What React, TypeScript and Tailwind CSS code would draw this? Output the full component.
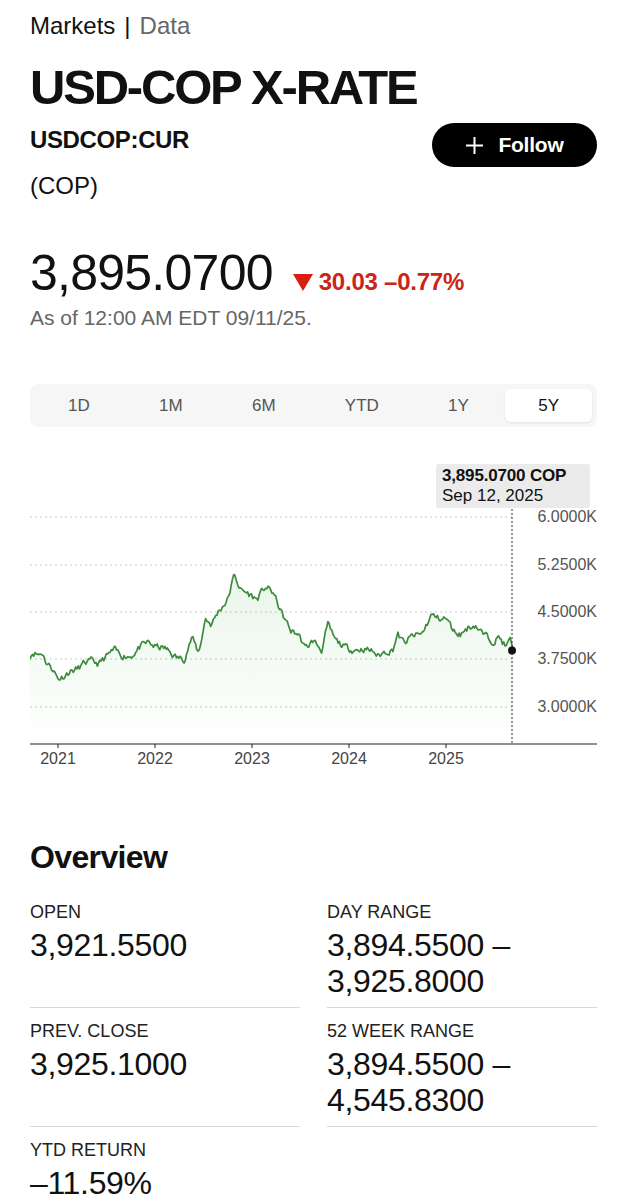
import React from 'react';

const FONT = { fontFamily: '"Liberation Sans", Arial, sans-serif' };

const anchors: [number, number][] = [
  [2020.71, 3800], [2020.74, 3870], [2020.8, 3830], [2020.84, 3860], [2020.88, 3700],
  [2020.95, 3600], [2021.0, 3440], [2021.05, 3480], [2021.12, 3560], [2021.2, 3600],
  [2021.28, 3700], [2021.35, 3720], [2021.42, 3680], [2021.5, 3800], [2021.58, 3900],
  [2021.65, 3820], [2021.75, 3800], [2021.85, 3950], [2021.93, 4020], [2022.0, 3950],
  [2022.1, 3930], [2022.22, 3780], [2022.3, 3760], [2022.38, 4100], [2022.45, 3850],
  [2022.52, 4400], [2022.58, 4300], [2022.65, 4500], [2022.75, 4700], [2022.82, 5100],
  [2022.88, 4850], [2022.95, 4800], [2023.05, 4700], [2023.14, 4900], [2023.22, 4800],
  [2023.3, 4500], [2023.4, 4200], [2023.48, 4150], [2023.55, 3920], [2023.63, 4050],
  [2023.72, 3900], [2023.78, 4300], [2023.86, 4050], [2023.95, 3950], [2024.05, 3900],
  [2024.15, 3920], [2024.25, 3880], [2024.3, 3800], [2024.38, 3880], [2024.45, 3900],
  [2024.5, 4150], [2024.57, 4000], [2024.65, 4120], [2024.75, 4150], [2024.85, 4450],
  [2024.92, 4400], [2025.0, 4400], [2025.08, 4200], [2025.15, 4150], [2025.22, 4250],
  [2025.3, 4300], [2025.38, 4150], [2025.48, 4050], [2025.55, 4100], [2025.62, 3950],
  [2025.66, 4050], [2025.7, 3895],
];

// local chart coordinates: chart box starts at page x=30, y=455
const tx = (t: number) => 28 + (t - 2021) * 97;
const vy = (v: number) => 62 + ((6000 - v) * 190) / 3000;

function buildSeries() {
  let seed = 11;
  const rnd = () => {
    seed = (seed * 16807) % 2147483647;
    return seed / 2147483647;
  };
  const pts: [number, number][] = [];
  const t0 = 2020.71;
  const t1 = 2025.7;
  const n = 380;
  let noise = 0;
  for (let i = 0; i <= n; i++) {
    const t = t0 + ((t1 - t0) * i) / n;
    let k = 0;
    while (k < anchors.length - 2 && anchors[k + 1][0] < t) k++;
    const [ta, va] = anchors[k];
    const [tb, vb] = anchors[k + 1];
    const f = Math.min(1, Math.max(0, (t - ta) / (tb - ta)));
    noise = noise * 0.5 + (rnd() - 0.5) * 95;
    const v = i === n ? 3895 : va + (vb - va) * f + noise;
    pts.push([tx(t), vy(v)]);
  }
  return pts;
}

const series = buildSeries();
const linePath = series.map((p, i) => `${i ? 'L' : 'M'}${p[0].toFixed(1)} ${p[1].toFixed(1)}`).join(' ');
const areaPath = `${linePath} L${series[series.length - 1][0].toFixed(1)} 289 L0 289 Z`;

const tabs = ['1D', '1M', '6M', 'YTD', '1Y', '5Y'];
const grid = [
  { v: '6.0000K', y: 62 },
  { v: '5.2500K', y: 110 },
  { v: '4.5000K', y: 157 },
  { v: '3.7500K', y: 204 },
  { v: '3.0000K', y: 252 },
];
const years = [
  { l: '2021', x: 28 },
  { l: '2022', x: 125 },
  { l: '2023', x: 222 },
  { l: '2024', x: 319 },
  { l: '2025', x: 416 },
];

const Chart = () => (
  <div className="relative mt-[28px] h-[320px]">
    <svg width="567" height="320" viewBox="0 0 567 320" className="block">
      <defs>
        <linearGradient id="fill" x1="0" y1="0" x2="0" y2="1">
          <stop offset="0%" stopColor="#4caf50" stopOpacity="0.12" />
          <stop offset="100%" stopColor="#4caf50" stopOpacity="0" />
        </linearGradient>
      </defs>
      {grid.map((g) => (
        <g key={g.v}>
          <line x1="0" x2="482" y1={g.y} y2={g.y} stroke="#c8c8c8" strokeDasharray="2 3" strokeWidth="1" />
          <text x="567" y={g.y + 1} textAnchor="end" dominantBaseline="middle" fontSize="16" fill="#555" style={FONT}>
            {g.v}
          </text>
        </g>
      ))}
      <path d={areaPath} fill="url(#fill)" />
      <path d={linePath} fill="none" stroke="#3d8b3d" strokeWidth="1.7" strokeLinejoin="round" />
      <line x1="482" x2="482" y1="54" y2="289" stroke="#333" strokeDasharray="2 2" strokeWidth="1" />
      <circle cx="482" cy="195.5" r="4" fill="#111" />
      <line x1="0" x2="567" y1="289" y2="289" stroke="#222" strokeWidth="1.2" />
      {years.map((y) => (
        <g key={y.l}>
          <line x1={y.x} x2={y.x} y1="289" y2="293" stroke="#222" strokeWidth="1" />
          <text x={y.x} y="305" textAnchor="middle" dominantBaseline="middle" fontSize="16" fill="#444" style={FONT}>
            {y.l}
          </text>
        </g>
      ))}
    </svg>
    <div className="absolute left-[406px] top-[9px] w-[154px] rounded-[3px] bg-[#ebebeb] px-[6px] py-[2px] text-[17px] leading-[20px] text-[#111]">
      <div className="font-bold tracking-[-0.01em]">3,895.0700 COP</div>
      <div>Sep 12, 2025</div>
    </div>
  </div>
);

const Stat = ({ label, lines }: { label: string; lines: string[] }) => (
  <div className="border-b border-[#d8d8d8] pt-[12px] pb-[8px]">
    <div className="text-[18px] leading-[22px] text-[#222]">{label}</div>
    <div className="mt-[4px] text-[32px] leading-[36px] text-[#111] tracking-[-0.01em]">
      {lines.map((l) => (
        <div key={l}>{l}</div>
      ))}
    </div>
  </div>
);

export default function App() {
  return (
    <div className="min-h-[1200px] bg-white px-[30px] pt-[12px] text-[#111]" style={FONT}>
      <div className="flex items-center text-[24px] leading-[28px]">
        <span className="text-[#111]">Markets</span>
        <span className="mx-[9px] text-[#111]">|</span>
        <span className="text-[#666]">Data</span>
      </div>

      <h1 className="mt-[19px] text-[49px] font-bold leading-[56px] tracking-[-0.045em]">USD-COP X-RATE</h1>

      <div className="mt-[8px] flex items-start justify-between">
        <div className="pt-[2px]">
          <div className="text-[24px] font-bold leading-[30px] tracking-[-0.015em]">USDCOP:CUR</div>
          <div className="mt-[16px] text-[24px] leading-[30px]">(COP)</div>
        </div>
        <button className="flex h-[44px] w-[165px] items-center justify-center gap-[14px] rounded-full bg-black text-white">
          <svg width="19" height="19" viewBox="0 0 19 19" fill="none" stroke="white" strokeWidth="2">
            <line x1="9.5" y1="1" x2="9.5" y2="18" />
            <line x1="1" y1="9.5" x2="18" y2="9.5" />
          </svg>
          <span className="text-[21px] font-bold tracking-[-0.01em]">Follow</span>
        </button>
      </div>

      <div className="mt-[44px] flex items-baseline gap-[20px]">
        <span className="text-[50px] leading-[56px] tracking-[-0.015em]">3,895.0700</span>
        <span className="flex items-baseline text-[24px] font-bold text-[#cc2418] tracking-[-0.01em]">
          <svg width="20" height="17" viewBox="0 0 20 17" className="mr-[6px] self-center">
            <polygon points="0,0 20,0 10,17" fill="#d81e10" />
          </svg>
          30.03 –0.77%
        </span>
      </div>
      <div className="mt-[4px] text-[21px] leading-[26px] text-[#666]">As of 12:00 AM EDT 09/11/25.</div>

      <div className="mt-[53px] flex h-[43px] justify-between rounded-lg bg-[#f6f6f6] p-[5px] text-[17px]">
        {tabs.map((t) => (
          <div
            key={t}
            className={`flex items-center justify-center rounded-md px-[33px] ${
              t === '5Y' ? 'bg-white text-[#111] shadow-[0_1px_3px_rgba(0,0,0,0.08)]' : 'text-[#555]'
            }`}
          >
            {t}
          </div>
        ))}
      </div>

      <Chart />

      <h2 className="mt-[64px] text-[32px] font-bold leading-[36px] tracking-[-0.02em]">Overview</h2>

      <div className="mt-[14px] grid grid-cols-2 gap-x-[27px]">
        <Stat label="OPEN" lines={['3,921.5500']} />
        <Stat label="DAY RANGE" lines={['3,894.5500 –', '3,925.8000']} />
        <Stat label="PREV. CLOSE" lines={['3,925.1000']} />
        <Stat label="52 WEEK RANGE" lines={['3,894.5500 –', '4,545.8300']} />
        <div className="pt-[12px]">
          <div className="text-[18px] leading-[22px] text-[#222]">YTD RETURN</div>
          <div className="mt-[4px] text-[32px] leading-[36px] tracking-[-0.01em]">–11.59%</div>
        </div>
      </div>
    </div>
  );
}
